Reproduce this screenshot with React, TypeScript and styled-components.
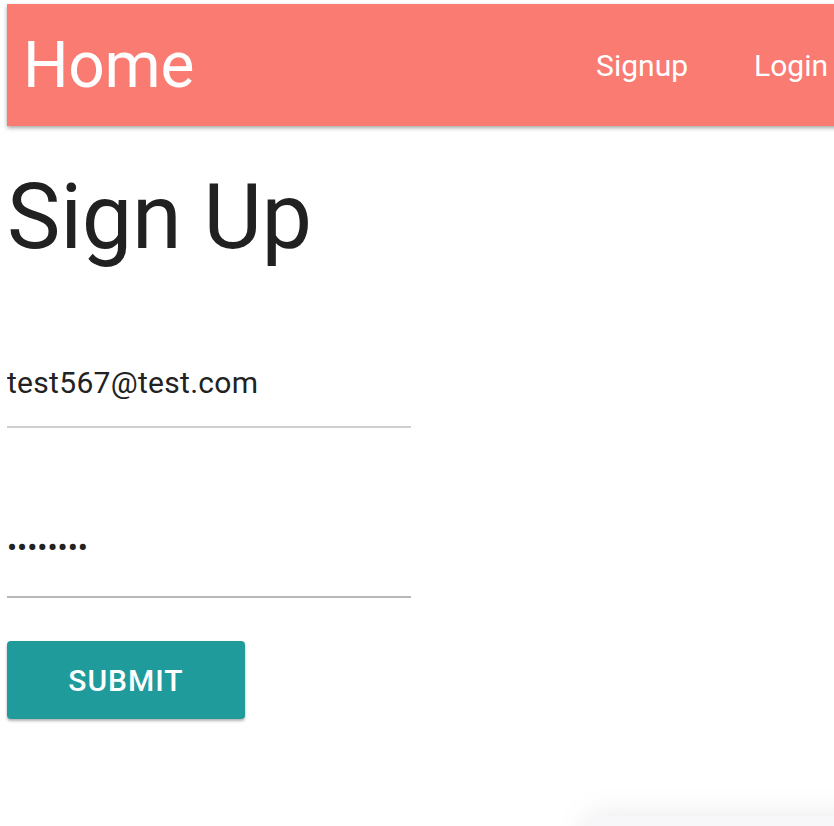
import React from "react";
import styled, { createGlobalStyle } from "styled-components";

const Global = createGlobalStyle`
  html, body { margin: 0; padding: 0; background: #fff; }
  body { font-family: Roboto, "Liberation Sans", Arial, sans-serif; overflow: hidden; }
`;

const Page = styled.div`
  width: 834px;
  height: 826px;
  position: relative;
  overflow: hidden;
  padding: 4px 0 0 7px;
  box-sizing: border-box;
`;

const NavBar = styled.header`
  height: 122px;
  margin-right: -20px;
  background: #fa7b72;
  box-shadow: 0 2px 4px rgba(0, 0, 0, 0.35);
  display: flex;
  align-items: center;
  padding: 0 0 0 16px;
`;

const Brand = styled.a`
  color: #fff;
  font-size: 64px;
  font-weight: 400;
  text-decoration: none;
  letter-spacing: -0.3px;
  flex: 1;
`;

const NavLinks = styled.nav`
  display: flex;
  gap: 66px;
  padding-right: 26px;
`;

const NavLink = styled.a`
  color: #fff;
  font-size: 30px;
  text-decoration: none;
`;

const Main = styled.main`
  display: flex;
  flex-direction: column;
  width: 404px;
`;

const Title = styled.h1`
  margin: 47px 0 0 0;
  font-size: 90px;
  font-weight: 400;
  color: #212121;
  line-height: 1;
  letter-spacing: -0.3px;
`;

const Field = styled.div<{ $top: number; $bottom: number; $line: string }>`
  margin-top: ${(p) => p.$top}px;
  padding-bottom: ${(p) => p.$bottom}px;
  border-bottom: 2px solid ${(p) => p.$line};
  display: flex;
  align-items: center;
`;

const Input = styled.input`
  border: none;
  outline: none;
  padding: 0;
  height: 40px;
  font-family: Roboto, "Liberation Sans", Arial, sans-serif;
  font-size: 30px;
  letter-spacing: 0.3px;
  color: #222;
  width: 100%;
  background: transparent;
`;

const Dots = styled.span`
  height: 40px;
  line-height: 40px;
  font-size: 30px;
  color: #222;
  font-family: Roboto, sans-serif;
`;

const SubmitButton = styled.button`
  margin-top: 43px;
  width: 238px;
  height: 78px;
  border: none;
  border-radius: 4px;
  background: #209b9b;
  color: #fff;
  font-family: Roboto, "Liberation Sans", Arial, sans-serif;
  font-size: 30px;
  font-weight: 500;
  letter-spacing: 1px;
  box-shadow: 0 2px 3px rgba(0, 0, 0, 0.3);
  cursor: pointer;
`;

const CornerShade = styled.div`
  position: absolute;
  right: -40px;
  bottom: -30px;
  width: 290px;
  height: 40px;
  border-radius: 20px;
  box-shadow: 0 0 30px rgba(120, 110, 130, 0.16);
  background: rgba(240, 238, 243, 0.5);
`;

export default function App() {
  return (
    <>
      <Global />
      <Page>
        <NavBar>
          <Brand href="#">Home</Brand>
          <NavLinks>
            <NavLink href="#">Signup</NavLink>
            <NavLink href="#">Login</NavLink>
          </NavLinks>
        </NavBar>
        <Main>
          <Title>Sign Up</Title>
          <Field $top={99} $bottom={24} $line="#cfcfcf">
            <Input defaultValue="test567@test.com" />
          </Field>
          <Field $top={100} $bottom={28} $line="#b8b8b8">
            <Dots>••••••••</Dots>
          </Field>
          <SubmitButton>SUBMIT</SubmitButton>
        </Main>
        <CornerShade />
      </Page>
    </>
  );
}
